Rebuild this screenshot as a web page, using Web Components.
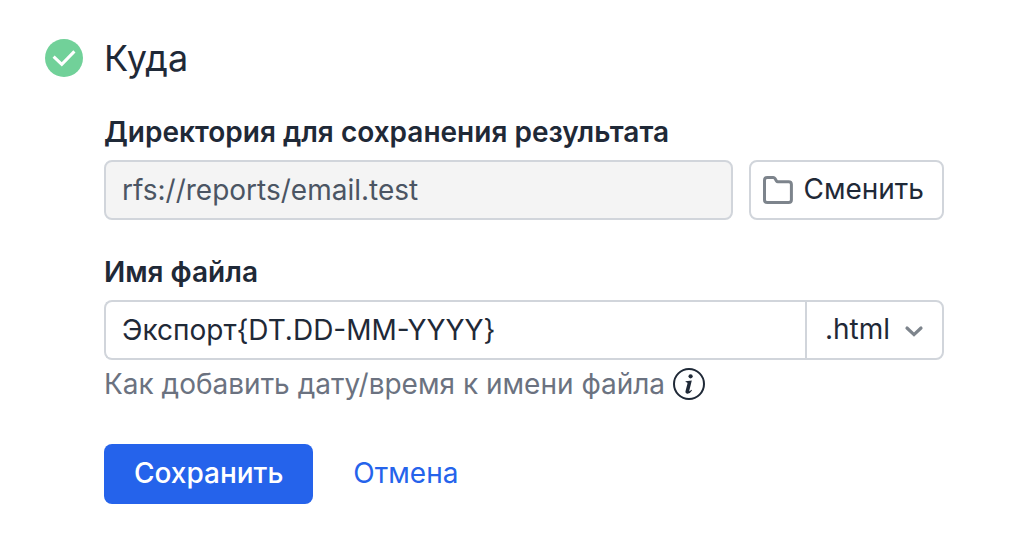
<!DOCTYPE html>
<html lang="ru">
<head>
<meta charset="utf-8">
<meta name="viewport" content="width=device-width, initial-scale=1">
<title>Куда</title>
<style>
  body {
    margin: 0;
    background: #fff;
    color: #1f2937;
    font: 400 28px/32px Inter, "Liberation Sans", sans-serif;
    --line: #d1d5db;
    --muted: #6b7280;
    --accent: #2563eb;
    --radius: 8px;
  }
</style>
</head>
<body>
<form-step heading="Куда">
  <text-field label="Директория для сохранения результата" value="rfs://reports/email.test" readonly>
    <outline-button slot="side">Сменить</outline-button>
  </text-field>
  <file-name-field label="Имя файла" value="Экспорт{DT.DD-MM-YYYY}">
    <hint-line slot="hint">Как добавить дату/время к имени файла</hint-line>
  </file-name-field>
  <form-actions></form-actions>
</form-step>

<script>
const base = `<style>
  *, *::before { box-sizing: border-box; }
  button, input, select { font: inherit; color: inherit; margin: 0; }
  svg { display: block; flex: none; fill: none; }
  label { display: block; font-weight: 600; }
  input { display: block; width: 100%; min-width: 0; height: 60px; padding: 0 16px;
    border: 2px solid var(--line); border-radius: var(--radius); background: #fff; }
</style>`;

class BaseElement extends HTMLElement {
  constructor() {
    super();
    this.attachShadow({ mode: "open" });
  }
  connectedCallback() {
    this.shadowRoot.innerHTML = base + this.render();
    this.ready();
  }
  ready() {}
}

customElements.define("form-step", class extends BaseElement {
  render() {
    return `<style>
      :host { display: block; padding: 34px 92px 40px 45px; }
      section { display: grid; grid-template-columns: 38px minmax(0, 1fr); column-gap: 21px; row-gap: 34px; align-items: center; }
      h1 { margin: 0; font-size: 36px; line-height: 48px; font-weight: 400; }
      .body { grid-column: 2; display: flex; flex-direction: column; gap: 36px; }
    </style>
    <section>
      <svg width="38" height="38" viewBox="0 0 38 38" aria-hidden="true">
        <circle cx="19" cy="19" r="19" fill="#71d199"/>
        <path d="M8.6 17.6 16.8 25.4 29.4 12.4" stroke="#fff" stroke-width="3"/>
      </svg>
      <h1></h1>
      <div class="body"><slot></slot></div>
    </section>`;
  }
  ready() { this.shadowRoot.querySelector("h1").textContent = this.getAttribute("heading"); }
});

class LabelledField extends BaseElement {
  ready() {
    this.shadowRoot.querySelector("label").textContent = this.getAttribute("label");
    const input = this.shadowRoot.querySelector("input");
    input.value = this.getAttribute("value");
    input.readOnly = this.hasAttribute("readonly");
  }
}

customElements.define("text-field", class extends LabelledField {
  render() {
    return `<style>
      :host { display: block; }
      .row { display: flex; gap: 16px; margin-top: 12px; }
      input { flex: 1; }
      input:read-only { background: #f4f4f4; color: #4b5563; }
    </style>
    <label for="value"></label>
    <div class="row"><input id="value" type="text"><slot name="side"></slot></div>`;
  }
});

customElements.define("file-name-field", class extends LabelledField {
  render() {
    return `<style>
      :host { display: block; }
      .row { display: flex; margin: 12px 0 8px; }
      input { flex: 1; border-right: 0; border-radius: var(--radius) 0 0 var(--radius); }
      .type { display: grid; align-items: center; flex: none; width: 139px; }
      select, .type svg { grid-area: 1 / 1; }
      select { appearance: none; width: 100%; height: 60px; padding: 0 48px 2px 18px; background: #fff;
        border: 2px solid var(--line); border-radius: 0 var(--radius) var(--radius) 0; }
      .type svg { justify-self: end; margin-right: 20px; pointer-events: none; }
    </style>
    <label for="name"></label>
    <div class="row">
      <input id="name" type="text">
      <div class="type">
        <select aria-label="Расширение файла"><option>.html</option></select>
        <svg width="20" height="16" viewBox="0 0 20 16" aria-hidden="true">
          <path d="M3 6 10 12.6 17 6" stroke="#7d848c" stroke-width="3.2" stroke-linecap="round"/>
        </svg>
      </div>
    </div>
    <slot name="hint"></slot>`;
  }
});

customElements.define("outline-button", class extends BaseElement {
  render() {
    return `<style>
      :host { display: block; flex: none; }
      button { display: flex; align-items: center; gap: 10px; height: 60px; padding: 0 18px 2px 12px;
        border: 2px solid var(--line); border-radius: var(--radius); background: #fff; white-space: nowrap; }
    </style>
    <button type="button">
      <svg width="30" height="30" viewBox="0 -2 30 30" aria-hidden="true">
        <path d="M4.3 1.5H10.2Q11.4 1.5 12 2.5L13.6 5.2Q14 5.8 14.8 5.8H25.6Q28.4 5.8 28.4 8.6V24Q28.4 26.5 25.6 26.5H4.3Q1.5 26.5 1.5 24V4.3Q1.5 1.5 4.3 1.5Z" stroke="#7d848c" stroke-width="3" stroke-linejoin="round"/>
      </svg>
      <span><slot></slot></span>
    </button>`;
  }
});

customElements.define("hint-line", class extends BaseElement {
  render() {
    return `<style>
      :host { display: flex; align-items: center; gap: 8px; color: var(--muted); }
    </style>
    <span><slot></slot></span>
    <svg width="32" height="32" viewBox="0 0 32 32" aria-hidden="true">
      <circle cx="16" cy="16" r="15" stroke="#1f2937" stroke-width="2"/>
      <circle cx="17.6" cy="8.3" r="2.1" fill="#1f2937"/>
      <path d="M12.6 13.2 18.8 12.4 16.4 22.3Q16.1 23.6 17 23L18.4 21.8 19 22.4Q16.8 25.9 14.2 25.7 11.9 25.3 12.6 22.8L14.5 15.6Q14.8 14.2 12.6 14.1Z" fill="#1f2937"/>
    </svg>`;
  }
});

customElements.define("form-actions", class extends BaseElement {
  render() {
    return `<style>
      :host { display: flex; flex-wrap: wrap; gap: 10px; margin-top: 8px; }
      button { height: 60px; padding: 0 30px 2px; border: 0; border-radius: var(--radius); background: none; }
      .save { background: var(--accent); color: #fff; font-weight: 500; }
      .cancel { color: var(--accent); }
    </style>
    <button class="save" type="button">Сохранить</button>
    <button class="cancel" type="button">Отмена</button>`;
  }
});
</script>
</body>
</html>
